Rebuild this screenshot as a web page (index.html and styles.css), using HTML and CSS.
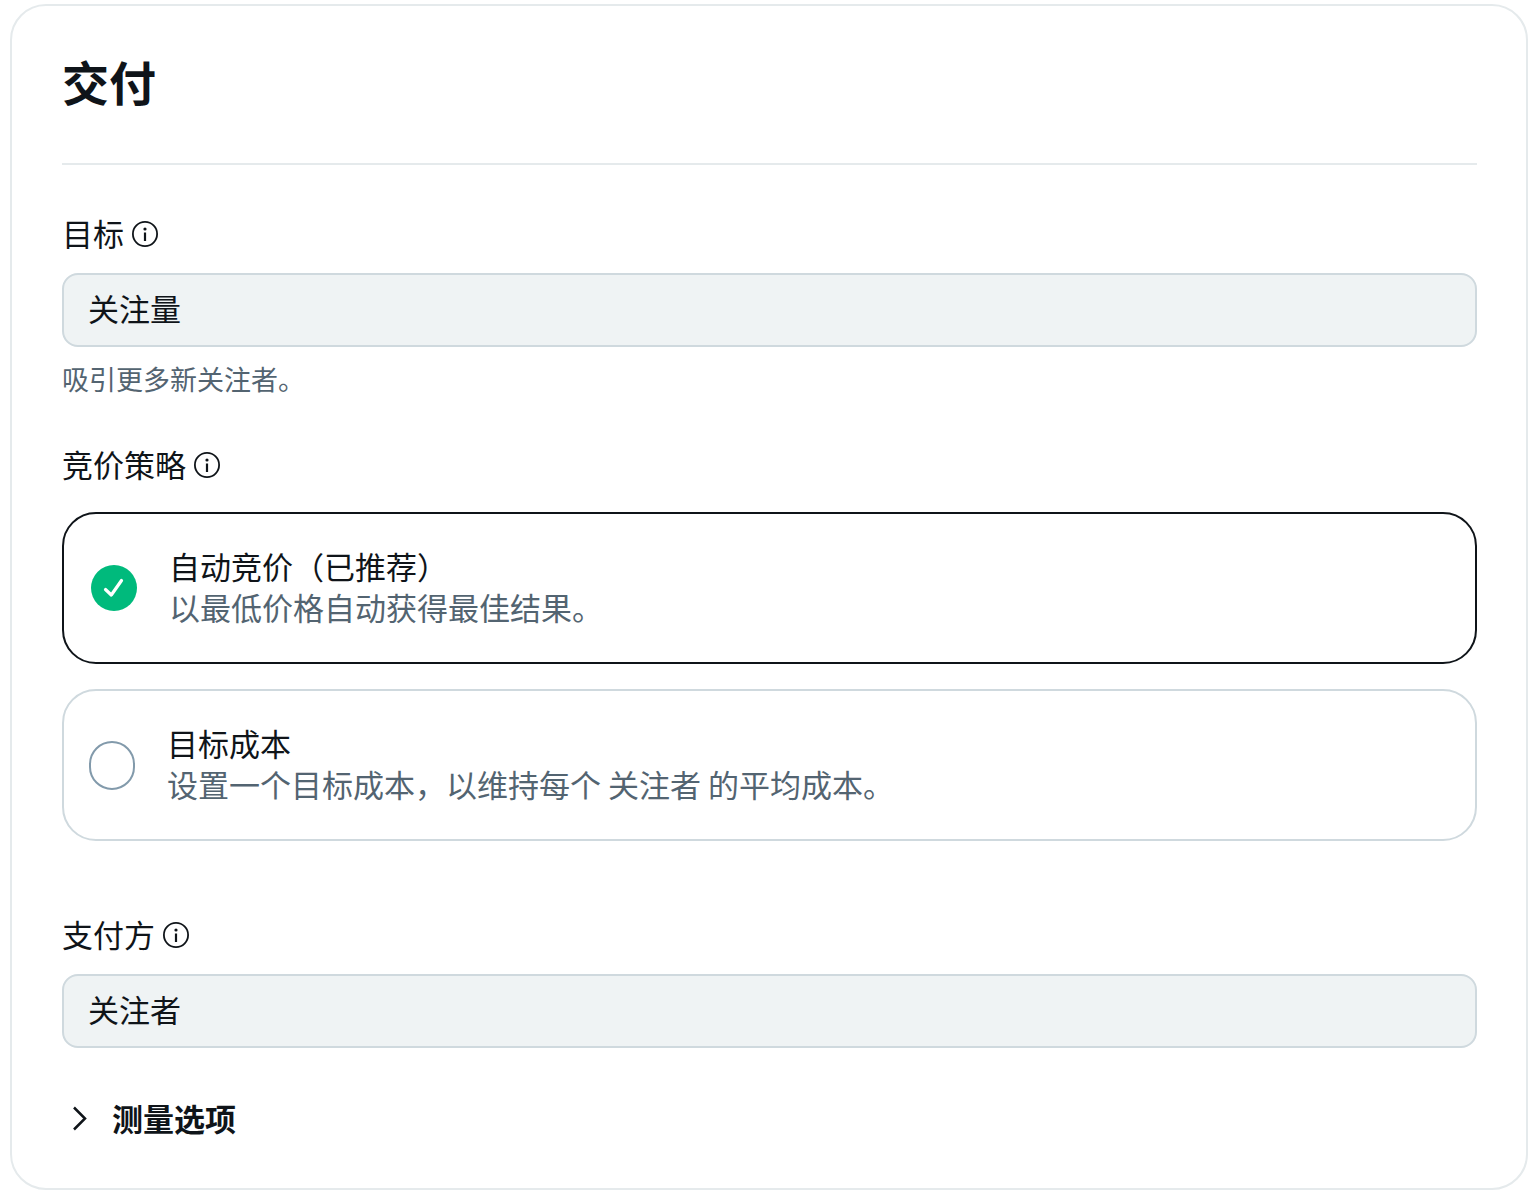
FILE: index.html
```html
<!DOCTYPE html>
<html lang="zh-CN">
<head>
<meta charset="utf-8">
<meta name="viewport" content="width=device-width, initial-scale=1">
<title>交付</title>
<link rel="stylesheet" href="styles.css">
</head>
<body>
<svg class="sprite" aria-hidden="true">
  <symbol id="info" viewBox="0 0 26 28">
    <circle cx="13" cy="15" r="12.1" fill="none" stroke="currentColor" stroke-width="1.8"/>
    <circle cx="13" cy="10" r="1.6" fill="currentColor"/>
    <path d="M13 13.500v8.500" fill="none" stroke="currentColor" stroke-width="2.200"/>
  </symbol>
</svg>
<main class="card">
  <h2 class="card-title">交付</h2>

  <section class="field">
    <div class="label-row">
      <label for="goal">目标</label>
      <svg class="info"><use href="#info"/></svg>
    </div>
    <input class="text-input" id="goal" type="text" value="关注量" readonly>
    <p class="hint">吸引更多新关注者。</p>
  </section>

  <fieldset class="field">
    <legend class="label-row">
      <span>竞价策略</span>
      <svg class="info"><use href="#info"/></svg>
    </legend>
    <div class="options">
      <label class="option option-selected">
        <span class="mark">
          <input class="radio" type="radio" name="bid" checked>
          <svg class="check" viewBox="0 0 46 46"><path d="M14.500 24.500l5.800 5.500L30.500 15.500" fill="none" stroke="#fff" stroke-width="3.200" stroke-linecap="round" stroke-linejoin="round"/></svg>
        </span>
        <span class="option-text">
          <span class="option-title">自动竞价（已推荐）</span>
          <span class="option-desc">以最低价格自动获得最佳结果。</span>
        </span>
      </label>
      <label class="option">
        <span class="mark"><input class="radio" type="radio" name="bid"></span>
        <span class="option-text">
          <span class="option-title">目标成本</span>
          <span class="option-desc">设置一个目标成本，以维持每个 关注者 的平均成本。</span>
        </span>
      </label>
    </div>
  </fieldset>

  <section class="field field-payer">
    <div class="label-row">
      <label for="payer">支付方</label>
      <svg class="info"><use href="#info"/></svg>
    </div>
    <input class="text-input" id="payer" type="text" value="关注者" readonly>
  </section>

  <button class="expander" type="button" aria-expanded="false">
    <svg class="chevron" viewBox="0 0 16 26"><path d="M2 2.500l11 11L2 24.500" fill="none" stroke="currentColor" stroke-width="2.500"/></svg>
    测量选项
  </button>
</main>
</body>
</html>
```
FILE: styles.css
```css
* {
  box-sizing: border-box;
}

body {
  margin: 4px 8px 12px 10px;
  background: #fff;
  color: #0f1419;
  font-family: "Noto Sans CJK SC", sans-serif;
  font-size: 31px;
  font-weight: 400;
  line-height: 40px;
}

.sprite {
  display: none;
}

.card {
  padding: 47px 49px 50px 50px;
  border: 2px solid #e5eaec;
  border-radius: 36px;
}

.card-title {
  margin: 0 0 48px;
  padding-bottom: 54px;
  border-bottom: 2px solid #e5eaec;
  font-size: 47px;
  font-weight: 700;
  line-height: 56px;
}

.field {
  min-width: 0;
  margin: 0 0 48px;
  padding: 0;
  border: 0;
}

.label-row {
  display: flex;
  align-items: center;
  gap: 8px;
  padding: 0;
}

.info {
  width: 26px;
  height: 28px;
}

.text-input {
  display: block;
  width: 100%;
  height: 74px;
  margin-top: 20px;
  padding: 0 24px 6px;
  border: 2px solid #cfd9de;
  border-radius: 16px;
  outline: 0;
  background: #eff3f4;
  color: inherit;
  font: inherit;
}

.hint {
  margin: 15px 0 0;
  color: #536471;
  font-size: 27px;
  line-height: 34px;
}

.options {
  display: grid;
  gap: 25px;
  margin-top: 28px;
}

.option {
  display: flex;
  align-items: center;
  gap: 32px;
  padding: 31px 25px;
  border: 2px solid #cfd9de;
  border-radius: 34px;
}

.option-selected {
  padding-left: 27px;
  border-color: #0f1419;
}

.mark {
  display: grid;
  flex: none;
}

.radio,
.check {
  grid-area: 1 / 1;
  width: 46px;
}

.radio {
  height: 49px;
  margin: 0;
  border: 2px solid #829aab;
  border-radius: 24px;
  appearance: none;
}

.radio:checked {
  height: 46px;
  border: 0;
  background: #00ba7c;
}

.check {
  height: 46px;
  pointer-events: none;
}

.option-text {
  display: grid;
  padding-bottom: 4px;
  line-height: 41px;
}

.option-desc {
  color: #536471;
}

.field-payer {
  margin: 73px 0 50px;
}

.expander {
  display: flex;
  align-items: center;
  gap: 24px;
  padding: 0 10px;
  border: 0;
  background: none;
  color: inherit;
  font: inherit;
  font-weight: 700;
}

.chevron {
  width: 16px;
  height: 26px;
}
```
